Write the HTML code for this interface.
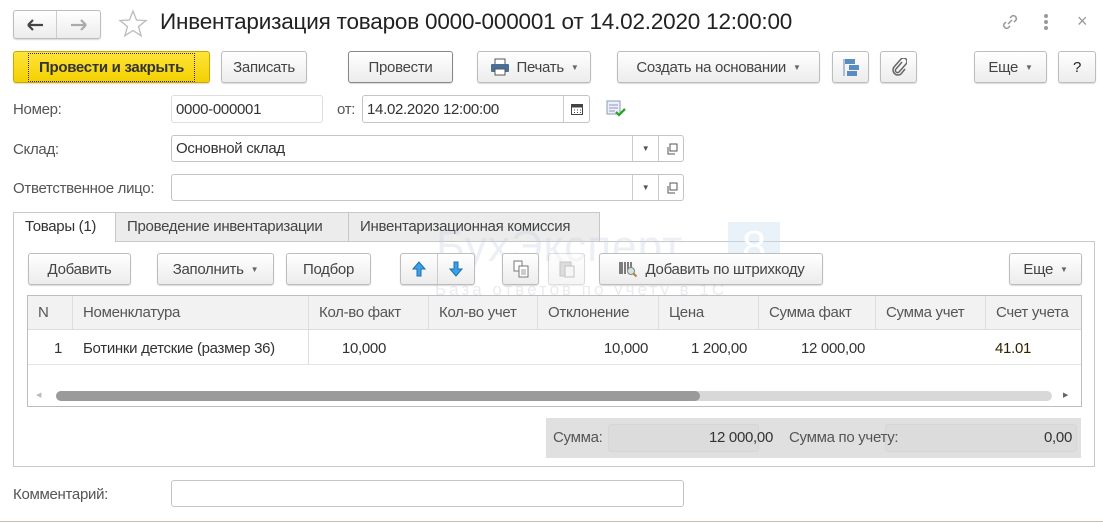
<!DOCTYPE html>
<html><head><meta charset="utf-8"><style>
*{box-sizing:border-box;margin:0;padding:0}
body{width:1103px;height:524px;background:#fff;position:relative;overflow:hidden;font-family:"Liberation Sans",Arial,sans-serif;font-size:15px;color:#333;letter-spacing:-0.3px}
.a{position:absolute}
.btn{position:absolute;border:1px solid #bdbdbd;border-radius:3px;background:linear-gradient(#fff,#ececec);box-shadow:0 1px 1px rgba(0,0,0,.15);display:flex;align-items:center;justify-content:center;color:#444;white-space:nowrap}
.inp{position:absolute;border:1px solid #c4c4c4;border-radius:3px;background:#fff;display:flex;align-items:center;padding-left:4px;color:#333}
.lbl{position:absolute;color:#555}
.dd{font-size:8px;margin-left:7px;color:#666}
.th{position:absolute;top:296px;height:34px;line-height:34px;color:#555;border-right:1px solid #ddd;padding-left:10px}
.td{position:absolute;top:331px;height:33px;line-height:35px;color:#333}
</style></head><body>
<!-- header -->
<div class="btn" style="left:13px;top:10px;width:88px;height:29px;justify-content:flex-start;padding:0">
 <div style="width:44px;height:100%;border-right:1px solid #ccc;display:flex;align-items:center;justify-content:center"><svg width="18" height="14"><path d="M2 7h15M2 7l5-5M2 7l5 5" stroke="#444" stroke-width="2.2" fill="none"/></svg></div>
 <div style="width:44px;display:flex;align-items:center;justify-content:center"><svg width="18" height="14"><path d="M1 7h15M16 7l-5-5M16 7l-5 5" stroke="#aaa" stroke-width="2.2" fill="none"/></svg></div>
</div>
<svg class="a" style="left:118px;top:9px" width="30" height="30"><path d="M15 2l3.5 9 9.5.5-7.5 6 2.6 9.3L15 21.5l-8.1 5.3 2.6-9.3-7.5-6 9.5-.5z" fill="none" stroke="#bbb" stroke-width="1.3"/></svg>
<div class="a" style="left:160px;top:9px;font-size:22.5px;color:#222;letter-spacing:-0.2px">Инвентаризация товаров 0000-000001 от 14.02.2020 12:00:00</div>
<svg class="a" style="left:1000px;top:12px" width="20" height="20"><path d="M8 12l4-4M6 10l-2 2a3 3 0 004 4l2-2M14 10l2-2a3 3 0 00-4-4l-2 2" stroke="#999" stroke-width="1.5" fill="none"/></svg>
<div class="a" style="left:1044px;top:14px;width:4px"><div style="width:4px;height:4px;background:#999;border-radius:2px;margin-bottom:2px"></div><div style="width:4px;height:4px;background:#999;border-radius:2px;margin-bottom:2px"></div><div style="width:4px;height:4px;background:#999;border-radius:2px"></div></div>
<div class="a" style="left:1077px;top:11px;font-size:18px;color:#999">×</div>
<!-- toolbar -->
<div class="btn" style="left:13px;top:51px;width:197px;height:32px;background:linear-gradient(#ffe43a,#f3d000);border-color:#c9a800;color:#333;font-weight:bold"><div style="border:1px dotted #333;padding:5px 10px">Провести и закрыть</div></div>
<div class="btn" style="left:221px;top:51px;width:86px;height:32px">Записать</div>
<div class="btn" style="left:348px;top:51px;width:105px;height:32px;border-color:#888">Провести</div>
<div class="btn" style="left:477px;top:51px;width:114px;height:32px"><svg width="20" height="18" style="margin-right:7px"><rect x="5" y="1" width="10" height="6" fill="#fff" stroke="#555"/><rect x="1" y="6" width="18" height="8" rx="1" fill="#4a6f94"/><rect x="5" y="11" width="10" height="6" fill="#fff" stroke="#555"/></svg>Печать<span class="dd">▼</span></div>
<div class="btn" style="left:617px;top:51px;width:203px;height:32px">Создать на основании<span class="dd">▼</span></div>
<div class="btn" style="left:832px;top:51px;width:37px;height:32px"><svg width="20" height="20"><rect x="4" y="2" width="10" height="5" fill="#5b8cc0"/><rect x="8" y="8" width="10" height="5" fill="#5b8cc0"/><rect x="6" y="14" width="10" height="5" fill="#5b8cc0"/><path d="M3 2v17" stroke="#5b8cc0"/></svg></div>
<div class="btn" style="left:880px;top:51px;width:37px;height:32px"><svg width="16" height="18"><path d="M11 4l-6 7a2 2 0 003 3l7-8a3.5 3.5 0 00-5-5L3 9a5 5 0 007 7l4-5" stroke="#666" stroke-width="1.5" fill="none"/></svg></div>
<div class="btn" style="left:974px;top:51px;width:73px;height:32px">Еще<span class="dd">▼</span></div>
<div class="btn" style="left:1058px;top:51px;width:38px;height:32px;color:#222">?</div>
<!-- fields -->
<div class="lbl" style="left:13px;top:101px">Номер:</div>
<div class="inp" style="left:171px;top:95px;width:152px;height:28px;border-color:#ddd">0000-000001</div>
<div class="lbl" style="left:337px;top:101px">от:</div>
<div class="inp" style="left:362px;top:95px;width:228px;height:28px">14.02.2020 12:00:00<div class="a" style="left:200px;top:0;width:27px;height:26px;border-left:1px solid #ccc;display:flex;align-items:center;justify-content:center"><svg width="12" height="12"><rect x="0.5" y="1.5" width="11" height="10" fill="none" stroke="#444"/><rect x="0.5" y="1.5" width="11" height="3" fill="#444"/><path d="M3 7h1M6 7h1M9 7h1M3 9.5h1M6 9.5h1M9 9.5h1" stroke="#444"/></svg></div></div>
<svg class="a" style="left:606px;top:100px" width="20" height="18"><rect x="1" y="1" width="13" height="13" fill="#eef" stroke="#8a9bb0"/><path d="M3 5h9M3 8h9M3 11h6" stroke="#8a9bb0"/><path d="M10 12l3 3 6-6" stroke="#2aa52a" stroke-width="2.3" fill="none"/></svg>
<div class="lbl" style="left:13px;top:141px">Склад:</div>
<div class="inp" style="left:171px;top:135px;width:513px;height:27px">Основной склад<div class="a" style="left:460px;top:0;width:26px;height:25px;border-left:1px solid #ccc;font-size:8px;color:#555;display:flex;align-items:center;justify-content:center">▼</div><div class="a" style="left:486px;top:0;width:26px;height:25px;border-left:1px solid #ccc;display:flex;align-items:center;justify-content:center"><svg width="12" height="12"><rect x="4" y="1" width="7" height="7" fill="none" stroke="#555"/><path d="M2 4v7h7" fill="none" stroke="#555"/></svg></div></div>
<div class="lbl" style="left:13px;top:180px">Ответственное лицо:</div>
<div class="inp" style="left:171px;top:174px;width:513px;height:27px"><div class="a" style="left:460px;top:0;width:26px;height:25px;border-left:1px solid #ccc;font-size:8px;color:#555;display:flex;align-items:center;justify-content:center">▼</div><div class="a" style="left:486px;top:0;width:26px;height:25px;border-left:1px solid #ccc;display:flex;align-items:center;justify-content:center"><svg width="12" height="12"><rect x="4" y="1" width="7" height="7" fill="none" stroke="#555"/><path d="M2 4v7h7" fill="none" stroke="#555"/></svg></div></div>
<!-- tabs -->
<div class="a" style="left:13px;top:241px;width:1082px;height:226px;border:1px solid #c8c8c8"></div>
<div class="a" style="left:115px;top:212px;width:234px;height:30px;background:#ececec;border:1px solid #c8c8c8;padding:5px 0 0 11px;color:#444">Проведение инвентаризации</div>
<div class="a" style="left:348px;top:212px;width:252px;height:30px;background:#ececec;border:1px solid #c8c8c8;padding:5px 0 0 11px;color:#444">Инвентаризационная комиссия</div>
<div class="a" style="left:13px;top:212px;width:103px;height:30px;background:#fff;border:1px solid #c8c8c8;border-bottom:none;padding:5px 0 0 11px;color:#333">Товары (1)</div>
<!-- watermark -->
<div class="a" style="left:436px;top:222px;font-size:44px;color:rgba(200,210,225,.35);letter-spacing:1px">БухЭксперт</div>
<div class="a" style="left:728px;top:222px;width:52px;height:55px;background:rgba(200,220,240,.4);color:#fff;font-size:44px;text-align:center">8</div>
<div class="a" style="left:435px;top:280px;font-size:17px;color:rgba(210,215,225,.5);letter-spacing:3px">База ответов по учету в 1С</div>
<!-- inner toolbar -->
<div class="btn" style="left:28px;top:253px;width:103px;height:32px">Добавить</div>
<div class="btn" style="left:157px;top:253px;width:117px;height:32px">Заполнить<span class="dd">▼</span></div>
<div class="btn" style="left:286px;top:253px;width:85px;height:32px">Подбор</div>
<div class="btn" style="left:400px;top:253px;width:75px;height:32px;padding:0"><div style="width:37px;height:100%;border-right:1px solid #ccc;display:flex;align-items:center;justify-content:center"><svg width="14" height="16"><path d="M7 1L1 8h4v7h4V8h4z" fill="#3aa0e8" stroke="#1d6fb0"/></svg></div><div style="width:37px;display:flex;align-items:center;justify-content:center"><svg width="14" height="16"><path d="M7 15L1 8h4V1h4v7h4z" fill="#3aa0e8" stroke="#1d6fb0"/></svg></div></div>
<div class="btn" style="left:502px;top:253px;width:37px;height:32px"><svg width="16" height="18"><rect x="1" y="1" width="8" height="10" fill="#fff" stroke="#777"/><rect x="6" y="6" width="9" height="11" fill="#fff" stroke="#777"/><path d="M8 10h5M8 12h5M8 14h5" stroke="#999"/></svg></div>
<div class="btn" style="left:548px;top:253px;width:37px;height:32px;opacity:.5"><svg width="16" height="18"><rect x="1" y="2" width="11" height="14" fill="#bbb" stroke="#888"/><rect x="6" y="6" width="9" height="11" fill="#eee" stroke="#888"/></svg></div>
<div class="btn" style="left:599px;top:253px;width:224px;height:32px"><svg width="20" height="18" style="margin-right:8px"><path d="M2 2v12M4 2v12M7 2v12M10 2v8M13 2v6" stroke="#555" stroke-width="1.5"/><circle cx="13" cy="11" r="3.5" fill="#cfe3f2" stroke="#886"/><path d="M15.5 13.5l3 3" stroke="#b08040" stroke-width="2"/></svg>Добавить по штрихкоду</div>
<div class="btn" style="left:1009px;top:253px;width:73px;height:32px">Еще<span class="dd">▼</span></div>
<!-- table -->
<div class="a" style="left:27px;top:295px;width:1055px;height:112px;border:1px solid #bdbdbd"></div>
<div class="a" style="left:28px;top:296px;width:1053px;height:34px;background:#f2f2f2;border-bottom:1px solid #ddd"></div>
<div class="a" style="left:28px;top:364px;width:1053px;height:1px;background:#e4e4e4"></div>
<div class="th" style="left:28px;width:45px">N</div>
<div class="th" style="left:73px;width:236px">Номенклатура</div>
<div class="th" style="left:309px;width:120px">Кол-во факт</div>
<div class="th" style="left:429px;width:109px">Кол-во учет</div>
<div class="th" style="left:538px;width:121px">Отклонение</div>
<div class="th" style="left:659px;width:100px">Цена</div>
<div class="th" style="left:759px;width:117px">Сумма факт</div>
<div class="th" style="left:876px;width:110px">Сумма учет</div>
<div class="th" style="left:986px;width:95px;border:none">Счет учета</div>
<div class="a" style="left:308px;top:330px;width:1px;height:34px;background:#ddd"></div>
<div class="td" style="left:28px;width:34px;text-align:right">1</div>
<div class="td" style="left:83px">Ботинки детские (размер 36)</div>
<div class="td" style="left:309px;width:77px;text-align:right">10,000</div>
<div class="td" style="left:538px;width:110px;text-align:right">10,000</div>
<div class="td" style="left:659px;width:88px;text-align:right">1 200,00</div>
<div class="td" style="left:759px;width:106px;text-align:right">12 000,00</div>
<div class="td" style="left:995px;color:#332200">41.01</div>
<div class="a" style="left:56px;top:391px;width:996px;height:10px;background:#d8d8d8;border-radius:5px"></div>
<div class="a" style="left:56px;top:391px;width:644px;height:10px;background:#9a9a9a;border-radius:5px"></div>
<div class="a" style="left:36px;top:391px;font-size:7px;color:#bbb">◀</div>
<div class="a" style="left:1063px;top:391px;font-size:7px;color:#666">▶</div>
<!-- totals -->
<div class="a" style="left:546px;top:418px;width:535px;height:40px;background:#e0e0e0"></div>
<div class="a" style="left:608px;top:424px;width:151px;height:28px;background:#dcdcdc;border:1px solid #d6d6d6;border-radius:3px"></div>
<div class="a" style="left:885px;top:424px;width:192px;height:28px;background:#dcdcdc;border:1px solid #d6d6d6;border-radius:3px"></div>
<div class="lbl" style="left:553px;top:429px">Сумма:</div>
<div class="a" style="left:640px;top:429px;width:133px;text-align:right;color:#333">12 000,00</div>
<div class="lbl" style="left:789px;top:429px">Сумма по учету:</div>
<div class="a" style="left:960px;top:429px;width:112px;text-align:right;color:#333">0,00</div>
<!-- comment -->
<div class="lbl" style="left:13px;top:486px">Комментарий:</div>
<div class="inp" style="left:171px;top:480px;width:513px;height:27px"></div>
<div class="a" style="left:0;top:521px;width:1103px;height:1px;background:#c8c0a0"></div>
</body></html>
